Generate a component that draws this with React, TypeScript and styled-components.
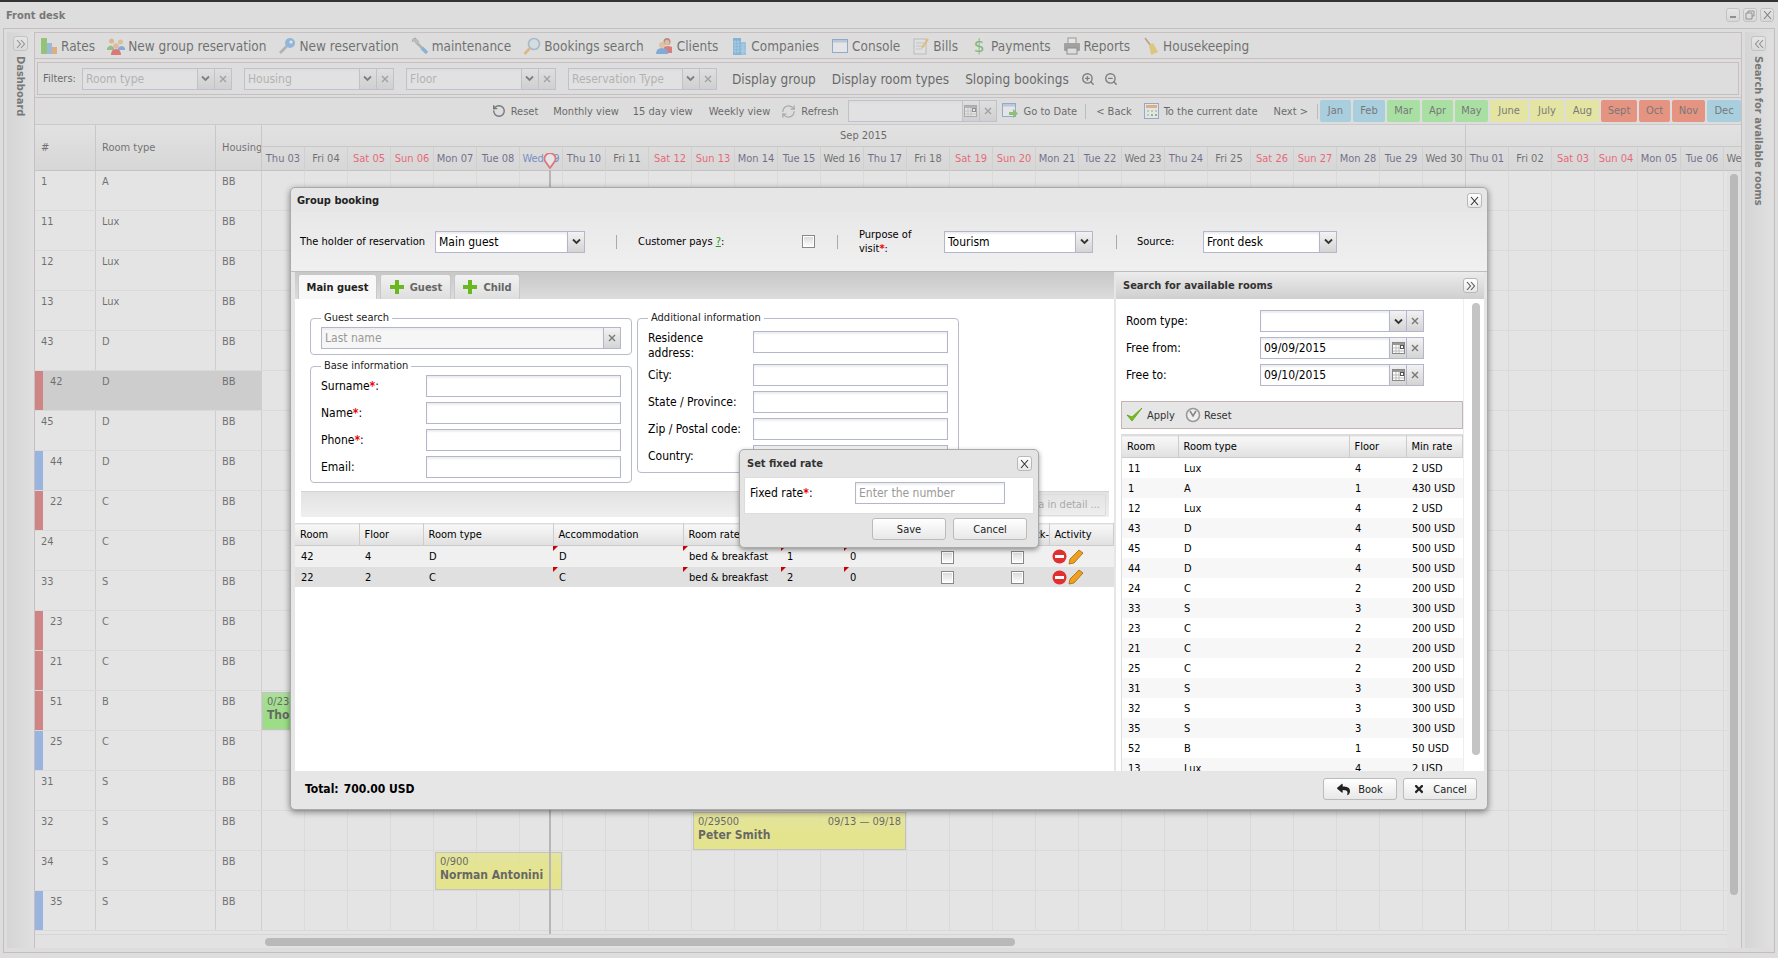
import React from "react";
import styled, { createGlobalStyle } from "styled-components";
import { FaReply, FaTimes } from "react-icons/fa";
import { RefreshCw, RotateCcw, ZoomIn, ZoomOut } from "lucide-react";

const Global = createGlobalStyle`
  html, body { margin: 0; padding: 0; background: #fafafa; overflow: hidden; }
  body { font-family: "DejaVu Sans Condensed", "DejaVu Sans", sans-serif; font-size: 11px; color: #000; }
  * { box-sizing: border-box; }
`;

// --- page frame ---
const Page = styled.div`
  position: relative;
  width: 1778px;
  height: 958px;
  overflow: hidden;
  border-top: 2px solid #333;
  background: #eee;
`;

const TitleBar = styled.div`
  height: 26px;
  display: flex;
  align-items: center;
  justify-content: space-between;
  padding: 0 4px 0 6px;
  font-weight: bold;
  font-size: 11px;
  color: #222;
`;

const WinButtons = styled.div`
  display: flex;
  gap: 3px;
`;

const WinButton = styled.div`
  width: 14px;
  height: 14px;
  border: 1px solid #bbb;
  border-radius: 3px;
  background: linear-gradient(#fff, #e4e4e4);
  display: flex;
  align-items: center;
  justify-content: center;
`;

const Frame = styled.div`
  height: 925px;
  margin: 0 3px;
  border: 1px solid #c0b0b0;
  padding: 3px 4px 4px 3px;
  display: flex;
`;

const SidePanel = styled.div`
  width: 27px;
  flex: none;
  background: linear-gradient(90deg, #dedede, #f4f4f4);
  display: flex;
  flex-direction: column;
  align-items: center;
  padding-top: 4px;
  gap: 5px;
`;

const SideTitle = styled.div`
  writing-mode: vertical-rl;
  font-weight: bold;
  font-size: 11px;
  color: #222;
`;

const SquareButton = styled.div`
  width: 15px;
  height: 15px;
  flex: none;
  border: 1px solid #b8b8b8;
  border-radius: 3px;
  background: linear-gradient(#fff, #e8e8e8);
  display: flex;
  align-items: center;
  justify-content: center;
`;

const Center = styled.div`
  width: 1708px;
  flex: none;
  display: flex;
  flex-direction: column;
  border: 1px solid #c4b4b4;
  border-bottom: none;
  margin-right: 3px;
`;

// --- main toolbar ---
const ToolBar = styled.div`
  height: 26px;
  flex: none;
  display: flex;
  align-items: center;
  padding-left: 5px;
  gap: 12px;
  font-size: 13.5px;
  color: #111;
  border-bottom: 1px solid #c4b4b4;
`;

const ToolItem = styled.div`
  display: flex;
  align-items: center;
  gap: 3px;
  white-space: nowrap;
`;

const FilterWrap = styled.div`
  height: 39px;
  flex: none;
  padding: 3px 2px 2px;
  border-bottom: 1px solid #c4b4b4;
`;

const FilterBox = styled.div`
  height: 33px;
  border: 1px solid #c4b4b4;
  display: flex;
  align-items: center;
  padding-left: 5px;
  font-size: 13.5px;
`;

const FilterLabel = styled.span`
  font-size: 11px;
  margin-right: 6px;
`;

const Combo = styled.div<{ $w: number; $ml?: number }>`
  display: flex;
  width: ${(p) => p.$w}px;
  height: 22px;
  margin-left: ${(p) => p.$ml ?? 0}px;
  flex: none;
`;

const ComboInput = styled.div<{ $dim?: boolean }>`
  flex: 1;
  min-width: 0;
  border: 1px solid #b4b6cc;
  background: ${(p) => (p.$dim ? "#f6f6f6" : "#fff")};
  box-shadow: inset 0 2px 2px #eee;
  padding: 2px 3px;
  font-size: 12px;
  line-height: 16px;
  white-space: nowrap;
  overflow: hidden;
  color: #000;
`;

const Placeholder = styled.span`
  color: #999;
`;

const ComboBtn = styled.div`
  width: 17px;
  flex: none;
  border: 1px solid #b4b6cc;
  border-left: none;
  background: linear-gradient(#f2f2f2, #d4d4d4);
  display: flex;
  align-items: center;
  justify-content: center;
  color: #444;
`;

const FilterLink = styled.span<{ $ml: number }>`
  margin-left: ${(p) => p.$ml}px;
  white-space: nowrap;
  display: flex;
`;

// --- date navigation ---
const NavBar = styled.div`
  height: 27px;
  flex: none;
  display: flex;
  align-items: center;
  justify-content: flex-end;
  font-size: 11px;
  border-bottom: 1px solid #c8c8c8;
`;

const NavItem = styled.span<{ $ml?: number }>`
  display: flex;
  align-items: center;
  gap: 5px;
  margin-left: ${(p) => p.$ml ?? 0}px;
  white-space: nowrap;
`;

const NavSep = styled.span<{ $ml: number; $mr: number }>`
  width: 1px;
  height: 15px;
  background: #aaa;
  margin: 0 ${(p) => p.$mr}px 0 ${(p) => p.$ml}px;
`;

const Months = styled.div`
  display: flex;
  gap: 2px;
`;

const Month = styled.div<{ $c: string; $w: number }>`
  width: ${(p) => p.$w}px;
  height: 22px;
  border-radius: 2px;
  background: ${(p) => p.$c};
  text-align: center;
  line-height: 22px;
  color: #222;
`;

// --- scheduler grid ---
const GridMain = styled.div`
  position: relative;
  flex: 1;
  min-height: 0;
  overflow: hidden;
  display: flex;
  flex-direction: column;
  background: #fcfcfc;
`;

const GridHeader = styled.div`
  height: 46px;
  flex: none;
  display: flex;
  background: linear-gradient(#f8f8f8, #e2e2e2);
  border-bottom: 1px solid #bbb;
`;

const HeadCell = styled.div<{ $w: number }>`
  width: ${(p) => p.$w}px;
  flex: none;
  padding: 16px 0 0 6px;
  border-right: 1px solid #c4c4c4;
  color: #111;
  white-space: nowrap;
  overflow: hidden;
`;

const Timeline = styled.div`
  flex: none;
  display: flex;
  flex-direction: column;
`;

const MonthRow = styled.div`
  height: 22px;
  display: flex;
  border-bottom: 1px solid #c4c4c4;
`;

const MonthName = styled.div<{ $w: number }>`
  width: ${(p) => p.$w}px;
  flex: none;
  text-align: center;
  line-height: 22px;
  border-right: 1px solid #c4c4c4;
  white-space: nowrap;
`;

const DayRow = styled.div`
  display: flex;
  flex: 1;
`;

const Day = styled.div<{ $kind: string; $end?: boolean }>`
  width: 43px;
  flex: none;
  text-align: center;
  line-height: 24px;
  white-space: nowrap;
  overflow: hidden;
  border-right: 1px solid ${(p) => (p.$end ? "#bbb" : "#d4d4d4")};
  color: ${(p) => (p.$kind === "off" ? "#ff0022" : p.$kind === "now" ? "#1850c0" : p.$kind === "wk" ? "#10104a" : "#111")};
`;

const Row = styled.div`
  position: relative;
  height: 40px;
  flex: none;
  display: flex;
  border-bottom: 1px solid #e8e8e8;
`;

const RowCell = styled.div<{ $w: number; $bar?: string; $on?: boolean }>`
  width: ${(p) => p.$w}px;
  flex: none;
  padding: 4px 0 0 ${(p) => (p.$bar ? 7 : 6)}px;
  border-left: ${(p) => (p.$bar ? `8px solid ${p.$bar}` : "none")};
  border-right: 1px solid #d0d0d0;
  background: ${(p) => (p.$on ? "#cfcfcf" : "transparent")};
  color: #111;
`;

const Cell = styled.div<{ $end?: boolean }>`
  width: 43px;
  flex: none;
  border-right: 1px solid ${(p) => (p.$end ? "#ccc" : "#e8e8e8")};
`;

const Booking = styled.div<{ $x: number; $w: number; $c: string }>`
  position: absolute;
  left: ${(p) => p.$x}px;
  top: 1px;
  width: ${(p) => p.$w}px;
  height: 38px;
  background: linear-gradient(${(p) => p.$c}cc, ${(p) => p.$c} 60%);
  border: 1px solid #bbb;
  padding: 2px 4px;
  line-height: 14px;
  overflow: hidden;
  white-space: nowrap;
`;

const BookingTop = styled.div`
  display: flex;
  justify-content: space-between;
`;

const BookingName = styled.div`
  font-weight: bold;
  font-size: 12px;
  line-height: 13px;
`;

const TodayLine = styled.div`
  position: absolute;
  left: 514px;
  top: 45px;
  bottom: 14px;
  width: 2px;
  background: #a0a0a0;
`;

const TodayPin = styled.svg`
  position: absolute;
  left: 508px;
  top: 28px;
`;

const HScroll = styled.div`
  height: 14px;
  flex: none;
  margin-top: auto;
  border-top: 1px solid #e0e0e0;
  background: #f8f8f8;
  padding: 3px 0 0 230px;
`;

const HThumb = styled.div`
  width: 750px;
  height: 8px;
  border-radius: 4px;
  background: #a6a6a6;
`;

const VScroll = styled.div`
  position: absolute;
  right: 0;
  top: 46px;
  bottom: 0;
  width: 14px;
  padding: 3px 0 0 3px;
  background: #f4f4f4;
`;

const VThumb = styled.div`
  width: 8px;
  height: 721px;
  border-radius: 4px;
  background: #a6a6a6;
`;

// --- overlay and group booking dialog ---
const Mask = styled.div`
  position: absolute;
  inset: 0;
  background: rgba(204, 204, 204, 0.5);
`;

const Modal = styled.div`
  position: absolute;
  left: 290px;
  top: 185px;
  width: 1198px;
  height: 623px;
  background: #e6e6e6;
  border: 1px solid #aaa;
  border-radius: 5px;
  box-shadow: 0 2px 6px rgba(0, 0, 0, 0.45);
  display: flex;
  flex-direction: column;
`;

const ModalTitle = styled.div`
  height: 24px;
  flex: none;
  display: flex;
  align-items: center;
  justify-content: space-between;
  padding: 1px 5px 0 6px;
  font-weight: bold;
  font-size: 11px;
  color: #222;
`;

const ModalHead = styled.div`
  height: 60px;
  flex: none;
  display: flex;
  align-items: center;
  padding: 0 0 0 9px;
  background: linear-gradient(#e8e8e8, #f0f0f0);
  border-bottom: 1px solid #bdbdbd;
`;

const HeadLabel = styled.span<{ $w?: number; $ml?: number }>`
  width: ${(p) => (p.$w ? `${p.$w}px` : "auto")};
  margin-left: ${(p) => p.$ml ?? 0}px;
  flex: none;
  line-height: 14px;
`;

const HeadSep = styled.span<{ $ml: number }>`
  width: 1px;
  height: 14px;
  flex: none;
  background: #aaa;
  margin-left: ${(p) => p.$ml}px;
`;

const Star = styled.span`
  color: #e00;
  font-weight: bold;
`;

const Hint = styled.span`
  color: #292;
  text-decoration: underline;
`;

const Check = styled.span<{ $ml?: number }>`
  display: inline-block;
  vertical-align: middle;
  width: 13px;
  height: 13px;
  flex: none;
  margin-left: ${(p) => p.$ml ?? 0}px;
  border: 1px solid #888;
  background: linear-gradient(#d8d8d8, #fff);
  box-shadow: inset 0 0 0 1px #fff;
`;

const Split = styled.div`
  flex: 1;
  min-height: 0;
  display: flex;
  padding: 0 4px;
  gap: 2px;
`;

const LeftPane = styled.div`
  width: 819px;
  flex: none;
  background: #fff;
  display: flex;
  flex-direction: column;
`;

const TabBand = styled.div`
  height: 27px;
  flex: none;
  display: flex;
  align-items: flex-end;
  gap: 3px;
  padding-left: 3px;
  background: linear-gradient(#c8c8c8, #dcdcdc);
`;

const Tab = styled.div<{ $on?: boolean; $w: number }>`
  width: ${(p) => p.$w}px;
  height: 25px;
  display: flex;
  align-items: center;
  justify-content: center;
  gap: 5px;
  border: 1px solid #c8c8c8;
  border-bottom: none;
  border-radius: 3px 3px 0 0;
  background: ${(p) => (p.$on ? "#f8f8f8" : "linear-gradient(#f2f2f2, #dedede)")};
  font-weight: bold;
  font-size: 11px;
  color: ${(p) => (p.$on ? "#222" : "#666")};
`;

const Forms = styled.div`
  height: 192px;
  flex: none;
  display: flex;
  gap: 5px;
  padding: 12px 0 0 15px;
`;

const FormCol = styled.div`
  width: 322px;
  flex: none;
  display: flex;
  flex-direction: column;
  gap: 4px;
`;

const Fieldset = styled.fieldset<{ $pb: number }>`
  margin: 0;
  padding: 2px 9px ${(p) => p.$pb}px 10px;
  border: 1px solid #b8bbc8;
  border-radius: 4px;
  min-width: 0;
`;

const Legend = styled.legend`
  padding: 0 3px;
  margin-left: 0;
  font-size: 11px;
  line-height: 14px;
  color: #222;
`;

const FieldRow = styled.div`
  display: flex;
  align-items: center;
  margin-bottom: 5px;
  &:last-child { margin-bottom: 0; }
`;

const TallFieldRow = styled.div`
  display: flex;
  align-items: flex-start;
  height: 37px;
`;

const FieldLabel = styled.label<{ $w: number }>`
  width: ${(p) => p.$w}px;
  flex: none;
  line-height: 14px;
  font-size: 12px;
`;

const TallLabel = styled(FieldLabel)`
  padding-top: 4px;
  line-height: 15px;
`;

const TextBox = styled.div<{ $w: number }>`
  width: ${(p) => p.$w}px;
  height: 22px;
  flex: none;
  border: 1px solid #b4b6cc;
  background: #fff;
  box-shadow: inset 0 2px 2px #eee;
  padding: 2px 3px;
  font-size: 12px;
  line-height: 16px;
  white-space: nowrap;
  overflow: hidden;
`;

const TallTextBox = styled(TextBox)`
  margin-top: 4px;
`;

const ActionBand = styled.div`
  height: 26px;
  flex: none;
  margin: 0 5px 6px 6px;
  display: flex;
  justify-content: flex-end;
  align-items: center;
  padding-right: 3px;
  background: linear-gradient(#e2e2e2, #efefef);
  border-top: 1px solid #d4d4d4;
`;

const GhostButton = styled.div`
  height: 22px;
  padding: 0 5px;
  border: 1px solid #ddd;
  border-radius: 2px;
  line-height: 20px;
  color: #aaa;
  white-space: nowrap;
`;

const Table = styled.table`
  width: 100%;
  border-collapse: collapse;
  table-layout: fixed;
  white-space: nowrap;
`;

const Th = styled.th<{ $w?: number; $pl?: number }>`
  width: ${(p) => (p.$w ? `${p.$w}px` : "auto")};
  height: 22px;
  padding: 0 0 0 ${(p) => p.$pl ?? 5}px;
  font-weight: normal;
  text-align: left;
  overflow: hidden;
  background: linear-gradient(#f8f8f8, #e0e0e0);
  border-right: 1px solid #ccc;
  border-top: 1px solid #ddd;
  border-bottom: 1px solid #ccc;
`;

const GuestRow = styled.tr<{ $alt?: boolean }>`
  background: ${(p) => (p.$alt ? "#e0e0e0" : "#f0f0f0")};
  height: ${(p) => (p.$alt ? 20 : 21)}px;
`;

const Td = styled.td<{ $flag?: boolean }>`
  position: relative;
  padding: 1px 0 0 6px;
  overflow: hidden;
  &::before {
    content: "";
    display: ${(p) => (p.$flag ? "block" : "none")};
    position: absolute;
    left: 0;
    top: 0;
    border-top: 5px solid #c00;
    border-right: 5px solid transparent;
  }
`;

const ActivityCell = styled.div`
  display: flex;
  align-items: center;
  gap: 1px;
  margin-left: -3px;
`;

const RightPane = styled.div`
  width: 368px;
  flex: none;
  background: #fff;
  display: flex;
  flex-direction: column;
`;

const PaneHead = styled.div`
  height: 27px;
  flex: none;
  display: flex;
  align-items: center;
  justify-content: space-between;
  padding: 0 6px 0 7px;
  background: linear-gradient(#ececec, #cfcfcf);
  font-weight: bold;
  font-size: 11px;
  color: #333;
`;

const PaneBody = styled.div`
  flex: 1;
  min-height: 0;
  display: flex;
  overflow: hidden;
`;

const PaneContent = styled.div`
  width: 347px;
  flex: none;
  padding: 11px 0 0 5px;
`;

const PaneForm = styled.div`
  padding-left: 5px;
  margin-bottom: 15px;
`;

const Bar = styled.div`
  height: 28px;
  display: flex;
  align-items: center;
  gap: 10px;
  padding-left: 4px;
  margin-bottom: 5px;
  border: 1px solid #c4b4b4;
  background: #e6e6e6;
  color: #333;
`;

const BarItem = styled.span`
  display: flex;
  align-items: center;
  gap: 3px;
`;

const PaneTd = styled.td`
  height: 20px;
  padding: 1px 0 0 6px;
`;

const RoomRow = styled.tr<{ $alt: boolean }>`
  background: ${(p) => (p.$alt ? "#f7f7f7" : "#fff")};
`;

const RoomTableWrap = styled.div`
  border: 1px solid #ddd;
  border-right: none;
`;

const PaneScroll = styled.div`
  width: 21px;
  flex: none;
  padding: 4px 0 0 8px;
  border-left: 1px solid #eee;
`;

const PaneThumb = styled.div`
  width: 8px;
  height: 452px;
  border-radius: 4px;
  background: #c4c4c4;
`;

const ModalFoot = styled.div`
  height: 38px;
  flex: none;
  display: flex;
  align-items: center;
  justify-content: space-between;
  padding: 0 10px 2px 14px;
`;

const Total = styled.b`
  display: flex;
  gap: 5px;
  font-size: 12px;
`;

const Buttons = styled.div`
  display: flex;
  gap: 6px;
`;

const Button = styled.div<{ $w: number }>`
  width: ${(p) => p.$w}px;
  height: 22px;
  display: flex;
  align-items: center;
  justify-content: center;
  gap: 8px;
  border: 1px solid #bbb;
  border-radius: 3px;
  background: linear-gradient(#fff, #e8e8e8);
  color: #222;
`;

// --- fixed rate popup ---
const Popup = styled.div`
  position: absolute;
  left: 448px;
  top: 261px;
  width: 300px;
  height: 99px;
  background: #e4e4e4;
  border: 1px solid #aaa;
  border-radius: 5px;
  box-shadow: 0 2px 5px rgba(0, 0, 0, 0.4);
  padding: 0 4px;
  display: flex;
  flex-direction: column;
`;

const PopupTitle = styled.div`
  height: 27px;
  flex: none;
  display: flex;
  align-items: center;
  justify-content: space-between;
  padding: 0 2px 0 3px;
  font-weight: bold;
  font-size: 11px;
  color: #333;
`;

const PopupBody = styled.div`
  height: 37px;
  flex: none;
  background: #fff;
  border: 1px solid #ddd;
  display: flex;
  align-items: flex-start;
  padding: 4px 0 0 5px;
`;

const PopupLabel = styled(FieldLabel)`
  padding-top: 4px;
`;

const PopupFoot = styled.div`
  flex: 1;
  display: flex;
  align-items: flex-start;
  justify-content: flex-end;
  gap: 7px;
  padding: 4px 7px 0 0;
`;

// --- little drawings ---
const Chevron = () => (
  <svg width="9" height="7" viewBox="0 0 9 7"><path d="M1 1.5 L4.5 5 L8 1.5" fill="none" stroke="#333" strokeWidth="1.8" /></svg>
);
const SmallX = () => (
  <svg width="8" height="8" viewBox="0 0 8 8"><path d="M1 1 L7 7 M7 1 L1 7" stroke="#777" strokeWidth="1.4" /></svg>
);
const ThinX = () => (
  <svg width="9" height="10" viewBox="0 0 9 10"><path d="M1 1 L8 9 M8 1 L1 9" stroke="#333" strokeWidth="1.1" /></svg>
);
const Arrows = ({ left }: { left?: boolean }) => (
  <svg width="10" height="10" viewBox="0 0 10 10">
    <path d={left ? "M5 1 L1.5 5 L5 9 M9 1 L5.5 5 L9 9" : "M1 1 L4.5 5 L1 9 M5 1 L8.5 5 L5 9"} fill="none" stroke="#555" strokeWidth="1.1" />
  </svg>
);
const Cal = () => (
  <svg width="13" height="12" viewBox="0 0 13 12">
    <rect x=".5" y=".5" width="12" height="11" fill="#fff" stroke="#888" />
    <rect x="1" y="1" width="11" height="2" fill="#999" />
    <path d="M1 6h11M1 9h11M4 3v8M7 3v8" stroke="#bbb" />
    <rect x="8.5" y="3.5" width="3" height="3" fill="#fff" stroke="#555" />
  </svg>
);
const CurrentCal = () => (
  <svg width="15" height="16" viewBox="0 0 15 16">
    <rect x=".5" y=".5" width="14" height="15" fill="#fff" stroke="#5888c8" />
    <rect x="2" y="2" width="11" height="3" fill="#f09040" />
    <path d="M3 7h2v2H3zM7 7h2v2H7zM11 7h2v2h-2zM3 11h2v2H3z" fill="#a8c8a0" />
    <path d="M7 11h2v2H7zM11 11h2v2h-2z" fill="#50a838" />
  </svg>
);
const GoTo = () => (
  <svg width="18" height="18" viewBox="0 0 18 18">
    <rect x="1.5" y="1.5" width="13" height="13" fill="#fff" stroke="#5888c8" />
    <rect x="2" y="2" width="12" height="2.5" fill="#a8c4e8" />
    <path d="M8 10h4V7l5 4.5L12 16v-3H8z" fill="#50b030" />
  </svg>
);
const Plus = () => (
  <svg width="16" height="16" viewBox="0 0 16 16"><path d="M6 1h4v5h5v4h-5v5H6v-5H1V6h5z" fill="#6ab820" /></svg>
);

const Glyphs: Record<string, React.ReactNode> = {
  rates: <><rect x="1" y="1" width="6" height="16" fill="#5cb820" /><rect x="7" y="6" width="5" height="11" fill="#6aa8e0" /><rect x="12" y="10" width="5" height="7" fill="#f09030" /></>,
  group: <><circle cx="4.5" cy="4" r="2.5" fill="#f0a050" /><circle cx="13.5" cy="5" r="2.5" fill="#f0b060" /><circle cx="9" cy="9" r="2.8" fill="#f0a878" /><path d="M0 11q4-5 7 0v2H0z" fill="#60b040" /><path d="M11 11q4-4 7 0v2h-7z" fill="#4088d8" /><path d="M4 18q0-6 5-6t5 6z" fill="#e02828" /></>,
  key: <><circle cx="12" cy="6" r="5" fill="#58a0e8" /><circle cx="13" cy="5" r="1.6" fill="#fff" /><path d="M8.5 9.5 L2 16" stroke="#999" strokeWidth="2.6" /></>,
  wrench: <><path d="M3 2 L7 6" stroke="#aaa" strokeWidth="4" /><path d="M1 5 Q1 1 5 1" fill="none" stroke="#888" strokeWidth="1" /><path d="M6 6 L14 14" stroke="#999" strokeWidth="2.5" /><path d="M11 11 L16 16" stroke="#4898e0" strokeWidth="3.4" /></>,
  search: <><circle cx="11" cy="7" r="5.5" fill="#dcecf8" stroke="#80a8c8" strokeWidth="1.6" /><path d="M7 11 L1.5 17" stroke="#f0a040" strokeWidth="2.6" /></>,
  clients: <><circle cx="11" cy="4.5" r="3.5" fill="#a05028" /><circle cx="11" cy="5.5" r="2.4" fill="#f0b080" /><path d="M8 10q4-2 8 0v6H8z" fill="#e03030" /><circle cx="6" cy="8" r="3" fill="#f0b880" /><path d="M0 17q0-6 6-6t6 6z" fill="#3888e0" /></>,
  company: <><rect x="3" y="1" width="8" height="17" fill="#3898e0" /><rect x="11" y="5" width="5" height="13" fill="#68b8f0" /><path d="M5 3v14M8 3v14M13 7v10M3 5h8M3 8h8M3 11h8M3 14h13" stroke="#a8d8f8" strokeWidth=".7" /></>,
  console: <><rect x="1.5" y="2.5" width="15" height="13" fill="#fff" stroke="#5888c8" /><rect x="2" y="3" width="14" height="2.5" fill="#a8c4e8" /></>,
  bills: <><rect x="2" y="2" width="12" height="15" fill="#f4f4f4" stroke="#aaa" /><path d="M4 6h8M4 9h8M4 12h6" stroke="#bbb" /><path d="M16 2 L10 11" stroke="#f0b020" strokeWidth="2" /></>,
  reports: <><rect x="5" y="1" width="8" height="6" fill="#fff" stroke="#666" /><rect x="1" y="6" width="16" height="8" rx="1" fill="#777" /><rect x="4" y="11" width="10" height="6" fill="#eee" stroke="#555" /></>,
  broom: <><path d="M3 1 L9 9" stroke="#b07030" strokeWidth="1.6" /><path d="M7 8 L11 6 L16 15 L9 18z" fill="#f0c030" /></>,
};

const Icon = ({ name }: { name: string }) => (
  <svg width="18" height="18" viewBox="0 0 18 18">{Glyphs[name]}</svg>
);

const Dollar = styled.span`
  width: 18px;
  text-align: center;
  font-family: "DejaVu Sans", sans-serif;
  font-size: 17px;
  color: #38a020;
`;

const tools = [
  ["rates", "Rates"], ["group", "New group reservation"], ["key", "New reservation"], ["wrench", "maintenance"],
  ["search", "Bookings search"], ["clients", "Clients"], ["company", "Companies"], ["console", "Console"],
  ["bills", "Bills"], ["dollar", "Payments"], ["reports", "Reports"], ["broom", "Housekeeping"],
];

const months: [string, string, number][] = [
  ["Jan", "#86d0ee", 31], ["Feb", "#86d0ee", 32], ["Mar", "#86f27a", 33], ["Apr", "#86f27a", 31], ["May", "#86f27a", 33],
  ["June", "#fcfc7a", 38], ["July", "#fcfc7a", 34], ["Aug", "#fcfc7a", 33], ["Sept", "#ff5c38", 36], ["Oct", "#ff5c38", 31],
  ["Nov", "#ff5c38", 33], ["Dec", "#86d0ee", 34],
];

const weekNames = ["Thu", "Fri", "Sat", "Sun", "Mon", "Tue", "Wed"];
const days = Array.from({ length: 35 }, (_, i) => {
  const n = i + 3 <= 30 ? i + 3 : i + 3 - 30;
  const name = weekNames[i % 7];
  const kind = name === "Sat" || name === "Sun" ? "off" : n === 9 && i < 28 ? "now" : name === "Mon" || name === "Tue" || name === "Thu" ? "wk" : "";
  return { label: `${name} ${String(n).padStart(2, "0")}`, kind, end: i === 27 };
});

const RED = "#d43e3e";
const BLUE = "#689cf4";
const rooms: [string, string, string?][] = [
  ["1", "A"], ["11", "Lux"], ["12", "Lux"], ["13", "Lux"], ["43", "D"], ["42", "D", RED], ["45", "D"], ["44", "D", BLUE],
  ["22", "C", RED], ["24", "C"], ["33", "S"], ["23", "C", RED], ["21", "C", RED], ["51", "B", RED], ["25", "C", BLUE],
  ["31", "S"], ["32", "S"], ["34", "S"], ["35", "S", BLUE],
];

const free = [
  ["11", "Lux", "4", "2 USD"], ["1", "A", "1", "430 USD"], ["12", "Lux", "4", "2 USD"], ["43", "D", "4", "500 USD"],
  ["45", "D", "4", "500 USD"], ["44", "D", "4", "500 USD"], ["24", "C", "2", "200 USD"], ["33", "S", "3", "300 USD"],
  ["23", "C", "2", "200 USD"], ["21", "C", "2", "200 USD"], ["25", "C", "2", "200 USD"], ["31", "S", "3", "300 USD"],
  ["32", "S", "3", "300 USD"], ["35", "S", "3", "300 USD"], ["52", "B", "1", "50 USD"], ["13", "Lux", "4", "2 USD"],
];

const Required = () => <Star>*</Star>;

export default function App() {
  return (
    <Page>
      <Global />
      <TitleBar>
        <span>Front desk</span>
        <WinButtons>
          <WinButton><svg width="8" height="8" viewBox="0 0 8 8"><rect x="1" y="5" width="6" height="2" fill="#555" /></svg></WinButton>
          <WinButton><svg width="10" height="10" viewBox="0 0 10 10"><path d="M3 3V1h6v5H7M1 3h6v6H1z" fill="none" stroke="#555" /></svg></WinButton>
          <WinButton><ThinX /></WinButton>
        </WinButtons>
      </TitleBar>
      <Frame>
        <SidePanel>
          <SquareButton><Arrows /></SquareButton>
          <SideTitle>Dashboard</SideTitle>
        </SidePanel>
        <Center>
          <ToolBar>
            {tools.map(([icon, label]) => (
              <ToolItem key={label}>
                {icon === "dollar" ? <Dollar>$</Dollar> : <Icon name={icon} />}
                {label}
              </ToolItem>
            ))}
          </ToolBar>
          <FilterWrap>
            <FilterBox>
              <FilterLabel>Filters:</FilterLabel>
              {[["Room type", 150], ["Housing", 150], ["Floor", 150], ["Reservation Type", 149]].map(([label, w], i) => (
                <Combo key={label} $w={w as number} $ml={i ? 12 : 0}>
                  <ComboInput $dim><Placeholder>{label}</Placeholder></ComboInput>
                  <ComboBtn><Chevron /></ComboBtn>
                  <ComboBtn><SmallX /></ComboBtn>
                </Combo>
              ))}
              <FilterLink $ml={15}>Display group</FilterLink>
              <FilterLink $ml={16}>Display room types</FilterLink>
              <FilterLink $ml={16}>Sloping bookings</FilterLink>
              <FilterLink $ml={12}><ZoomIn size={14} strokeWidth={2.4} color="#333" /></FilterLink>
              <FilterLink $ml={9}><ZoomOut size={14} strokeWidth={2.4} color="#333" /></FilterLink>
            </FilterBox>
          </FilterWrap>
          <NavBar>
            <NavItem><RotateCcw size={14} strokeWidth={2.4} color="#222" />Reset</NavItem>
            <NavItem $ml={15}>Monthly view</NavItem>
            <NavItem $ml={14}>15 day view</NavItem>
            <NavItem $ml={16}>Weekly view</NavItem>
            <NavItem $ml={11}><RefreshCw size={15} color="#888" />Refresh</NavItem>
            <Combo $w={149} $ml={9}>
              <ComboInput $dim />
              <ComboBtn><Cal /></ComboBtn>
              <ComboBtn><SmallX /></ComboBtn>
            </Combo>
            <NavItem $ml={4}><GoTo />Go to Date</NavItem>
            <NavSep $ml={8} $mr={10} />
            <NavItem>&lt; Back</NavItem>
            <NavItem $ml={12}><CurrentCal />To the current date</NavItem>
            <NavItem $ml={16}>Next &gt;</NavItem>
            <NavSep $ml={9} $mr={2} />
            <Months>
              {months.map(([m, c, w]) => <Month key={m} $c={c} $w={w}>{m}</Month>)}
            </Months>
          </NavBar>
          <GridMain>
            <GridHeader>
              <HeadCell $w={61}>#</HeadCell>
              <HeadCell $w={120}>Room type</HeadCell>
              <HeadCell $w={46}>Housing</HeadCell>
              <Timeline>
                <MonthRow>
                  <MonthName $w={1204}>Sep 2015</MonthName>
                </MonthRow>
                <DayRow>
                  {days.map((d) => <Day key={d.label} $kind={d.kind} $end={d.end}>{d.label}</Day>)}
                </DayRow>
              </Timeline>
            </GridHeader>
            {rooms.map(([num, type, bar]) => (
              <Row key={num}>
                <RowCell $w={61} $bar={bar} $on={num === "42"}>{num}</RowCell>
                <RowCell $w={120} $on={num === "42"}>{type}</RowCell>
                <RowCell $w={46} $on={num === "42"}>BB</RowCell>
                {days.map((d) => <Cell key={d.label} $end={d.end} />)}
                {num === "51" && (
                  <Booking $x={227} $w={200} $c="#6cf040">
                    <div>0/23</div>
                    <BookingName>Thomas</BookingName>
                  </Booking>
                )}
                {num === "32" && (
                  <Booking $x={658} $w={213} $c="#fcfc50">
                    <BookingTop><span>0/29500</span><span>09/13 — 09/18</span></BookingTop>
                    <BookingName>Peter Smith</BookingName>
                  </Booking>
                )}
                {num === "34" && (
                  <Booking $x={400} $w={127} $c="#fcfc50">
                    <div>0/900</div>
                    <BookingName>Norman Antonini</BookingName>
                  </Booking>
                )}
              </Row>
            ))}
            <HScroll><HThumb /></HScroll>
            <TodayLine />
            <TodayPin width="14" height="16" viewBox="0 0 14 16">
              <path d="M7 15 L2 8 A5.5 5.5 0 1 1 12 8 Z" fill="#fff" stroke="#f02030" strokeWidth="1.8" />
            </TodayPin>
            <VScroll><VThumb /></VScroll>
          </GridMain>
        </Center>
        <SidePanel>
          <SquareButton><Arrows left /></SquareButton>
          <SideTitle>Search for available rooms</SideTitle>
        </SidePanel>
      </Frame>
      <Mask />
      <Modal>
        <ModalTitle>
          Group booking
          <SquareButton><ThinX /></SquareButton>
        </ModalTitle>
        <ModalHead>
          <HeadLabel>The holder of reservation</HeadLabel>
          <Combo $w={150} $ml={10}>
            <ComboInput>Main guest</ComboInput>
            <ComboBtn><Chevron /></ComboBtn>
          </Combo>
          <HeadSep $ml={31} />
          <HeadLabel $w={164} $ml={21}>Customer pays <Hint>?</Hint>:</HeadLabel>
          <Check />
          <HeadSep $ml={22} />
          <HeadLabel $w={85} $ml={21}>Purpose of<br />visit<Required />:</HeadLabel>
          <Combo $w={149}>
            <ComboInput>Tourism</ComboInput>
            <ComboBtn><Chevron /></ComboBtn>
          </Combo>
          <HeadSep $ml={23} />
          <HeadLabel $w={66} $ml={20}>Source:</HeadLabel>
          <Combo $w={134}>
            <ComboInput>Front desk</ComboInput>
            <ComboBtn><Chevron /></ComboBtn>
          </Combo>
        </ModalHead>
        <Split>
          <LeftPane>
            <TabBand>
              <Tab $on $w={79}>Main guest</Tab>
              <Tab $w={71}><Plus />Guest</Tab>
              <Tab $w={66}><Plus />Child</Tab>
            </TabBand>
            <Forms>
              <FormCol>
                <Fieldset $pb={5}>
                  <Legend>Guest search</Legend>
                  <Combo $w={300}>
                    <ComboInput $dim><Placeholder>Last name</Placeholder></ComboInput>
                    <ComboBtn><SmallX /></ComboBtn>
                  </Combo>
                </Fieldset>
                <Fieldset $pb={4}>
                  <Legend>Base information</Legend>
                  <FieldRow><FieldLabel $w={105}>Surname<Required />:</FieldLabel><TextBox $w={195} /></FieldRow>
                  <FieldRow><FieldLabel $w={105}>Name<Required />:</FieldLabel><TextBox $w={195} /></FieldRow>
                  <FieldRow><FieldLabel $w={105}>Phone<Required />:</FieldLabel><TextBox $w={195} /></FieldRow>
                  <FieldRow><FieldLabel $w={105}>Email:</FieldLabel><TextBox $w={195} /></FieldRow>
                </Fieldset>
              </FormCol>
              <FormCol>
                <Fieldset $pb={5}>
                  <Legend>Additional information</Legend>
                  <TallFieldRow><TallLabel $w={105}>Residence<br />address:</TallLabel><TallTextBox $w={195} /></TallFieldRow>
                  <FieldRow><FieldLabel $w={105}>City:</FieldLabel><TextBox $w={195} /></FieldRow>
                  <FieldRow><FieldLabel $w={105}>State / Province:</FieldLabel><TextBox $w={195} /></FieldRow>
                  <FieldRow><FieldLabel $w={105}>Zip / Postal code:</FieldLabel><TextBox $w={195} /></FieldRow>
                  <FieldRow><FieldLabel $w={105}>Country:</FieldLabel><TextBox $w={195} /></FieldRow>
                </Fieldset>
              </FormCol>
            </Forms>
            <ActionBand><GhostButton>Show data in detail ...</GhostButton></ActionBand>
            <Table>
              <thead>
                <tr>
                  <Th $w={64}>Room</Th>
                  <Th $w={64}>Floor</Th>
                  <Th $w={130}>Room type</Th>
                  <Th $w={130}>Accommodation</Th>
                  <Th $w={98}>Room rate</Th>
                  <Th $w={63}>Adults</Th>
                  <Th $w={68}>Children</Th>
                  <Th $w={68}>Fixed rate</Th>
                  <Th $w={69} $pl={8}>Early check-in</Th>
                  <Th>Activity</Th>
                </tr>
              </thead>
              <tbody>
                {[["42", "4", "D", "1"], ["22", "2", "C", "2"]].map(([room, floor, type, adults], i) => (
                  <GuestRow key={room} $alt={i === 1}>
                    <Td>{room}</Td>
                    <Td>{floor}</Td>
                    <Td>{type}</Td>
                    <Td $flag>{type}</Td>
                    <Td $flag>bed &amp; breakfast</Td>
                    <Td $flag>{adults}</Td>
                    <Td $flag>0</Td>
                    <Td><Check $ml={23} /></Td>
                    <Td><Check $ml={25} /></Td>
                    <Td>
                      <ActivityCell>
                        <svg width="15" height="15" viewBox="0 0 15 15">
                          <circle cx="7.5" cy="7.5" r="7" fill="#e03030" />
                          <rect x="3" y="6" width="9" height="3" fill="#fff" />
                        </svg>
                        <svg width="16" height="16" viewBox="0 0 16 16">
                          <path d="M11 1 L15 4 L6 14 L1 15 L2 10 Z" fill="#f0a020" stroke="#a06810" strokeWidth=".8" />
                        </svg>
                      </ActivityCell>
                    </Td>
                  </GuestRow>
                ))}
              </tbody>
            </Table>
          </LeftPane>
          <RightPane>
            <PaneHead>
              Search for available rooms
              <SquareButton><Arrows /></SquareButton>
            </PaneHead>
            <PaneBody>
              <PaneContent>
                <PaneForm>
                  <FieldRow><FieldLabel $w={134}>Room type:</FieldLabel><Combo $w={164}><ComboInput /><ComboBtn><Chevron /></ComboBtn><ComboBtn><SmallX /></ComboBtn></Combo></FieldRow>
                  <FieldRow><FieldLabel $w={134}>Free from:</FieldLabel><Combo $w={164}><ComboInput>09/09/2015</ComboInput><ComboBtn><Cal /></ComboBtn><ComboBtn><SmallX /></ComboBtn></Combo></FieldRow>
                  <FieldRow><FieldLabel $w={134}>Free to:</FieldLabel><Combo $w={164}><ComboInput>09/10/2015</ComboInput><ComboBtn><Cal /></ComboBtn><ComboBtn><SmallX /></ComboBtn></Combo></FieldRow>
                </PaneForm>
                <Bar>
                  <BarItem>
                    <svg width="18" height="18" viewBox="0 0 18 18"><path d="M1 9 L6 15 L16 2 L6 11 Z" fill="#78c020" stroke="#58a010" strokeWidth=".8" /></svg>
                    Apply
                  </BarItem>
                  <BarItem>
                    <svg width="16" height="16" viewBox="0 0 16 16">
                      <circle cx="8" cy="8" r="6.5" fill="#eee" stroke="#999" strokeWidth="1.6" />
                      <path d="M5 4 L8 9 L11 4" fill="none" stroke="#888" strokeWidth="1.6" />
                    </svg>
                    Reset
                  </BarItem>
                </Bar>
                <RoomTableWrap>
                  <Table>
                    <thead>
                      <tr>
                        <Th $w={56}>Room</Th>
                        <Th $w={171}>Room type</Th>
                        <Th $w={57}>Floor</Th>
                        <Th>Min rate</Th>
                      </tr>
                    </thead>
                    <tbody>
                      {free.map(([room, type, floor, rate], i) => (
                        <RoomRow key={room} $alt={i % 2 === 1}>
                          <PaneTd>{room}</PaneTd>
                          <PaneTd>{type}</PaneTd>
                          <PaneTd>{floor}</PaneTd>
                          <PaneTd>{rate}</PaneTd>
                        </RoomRow>
                      ))}
                    </tbody>
                  </Table>
                </RoomTableWrap>
              </PaneContent>
              <PaneScroll><PaneThumb /></PaneScroll>
            </PaneBody>
          </RightPane>
        </Split>
        <ModalFoot>
          <Total><span>Total:</span><span>700.00 USD</span></Total>
          <Buttons>
            <Button $w={74}><FaReply size={13} />Book</Button>
            <Button $w={74}><FaTimes size={12} />Cancel</Button>
          </Buttons>
        </ModalFoot>
        <Popup>
          <PopupTitle>
            Set fixed rate
            <SquareButton><ThinX /></SquareButton>
          </PopupTitle>
          <PopupBody>
            <PopupLabel $w={105}>Fixed rate<Required />:</PopupLabel>
            <TextBox $w={150}><Placeholder>Enter the number</Placeholder></TextBox>
          </PopupBody>
          <PopupFoot>
            <Button $w={74}>Save</Button>
            <Button $w={74}>Cancel</Button>
          </PopupFoot>
        </Popup>
      </Modal>
    </Page>
  );
}
